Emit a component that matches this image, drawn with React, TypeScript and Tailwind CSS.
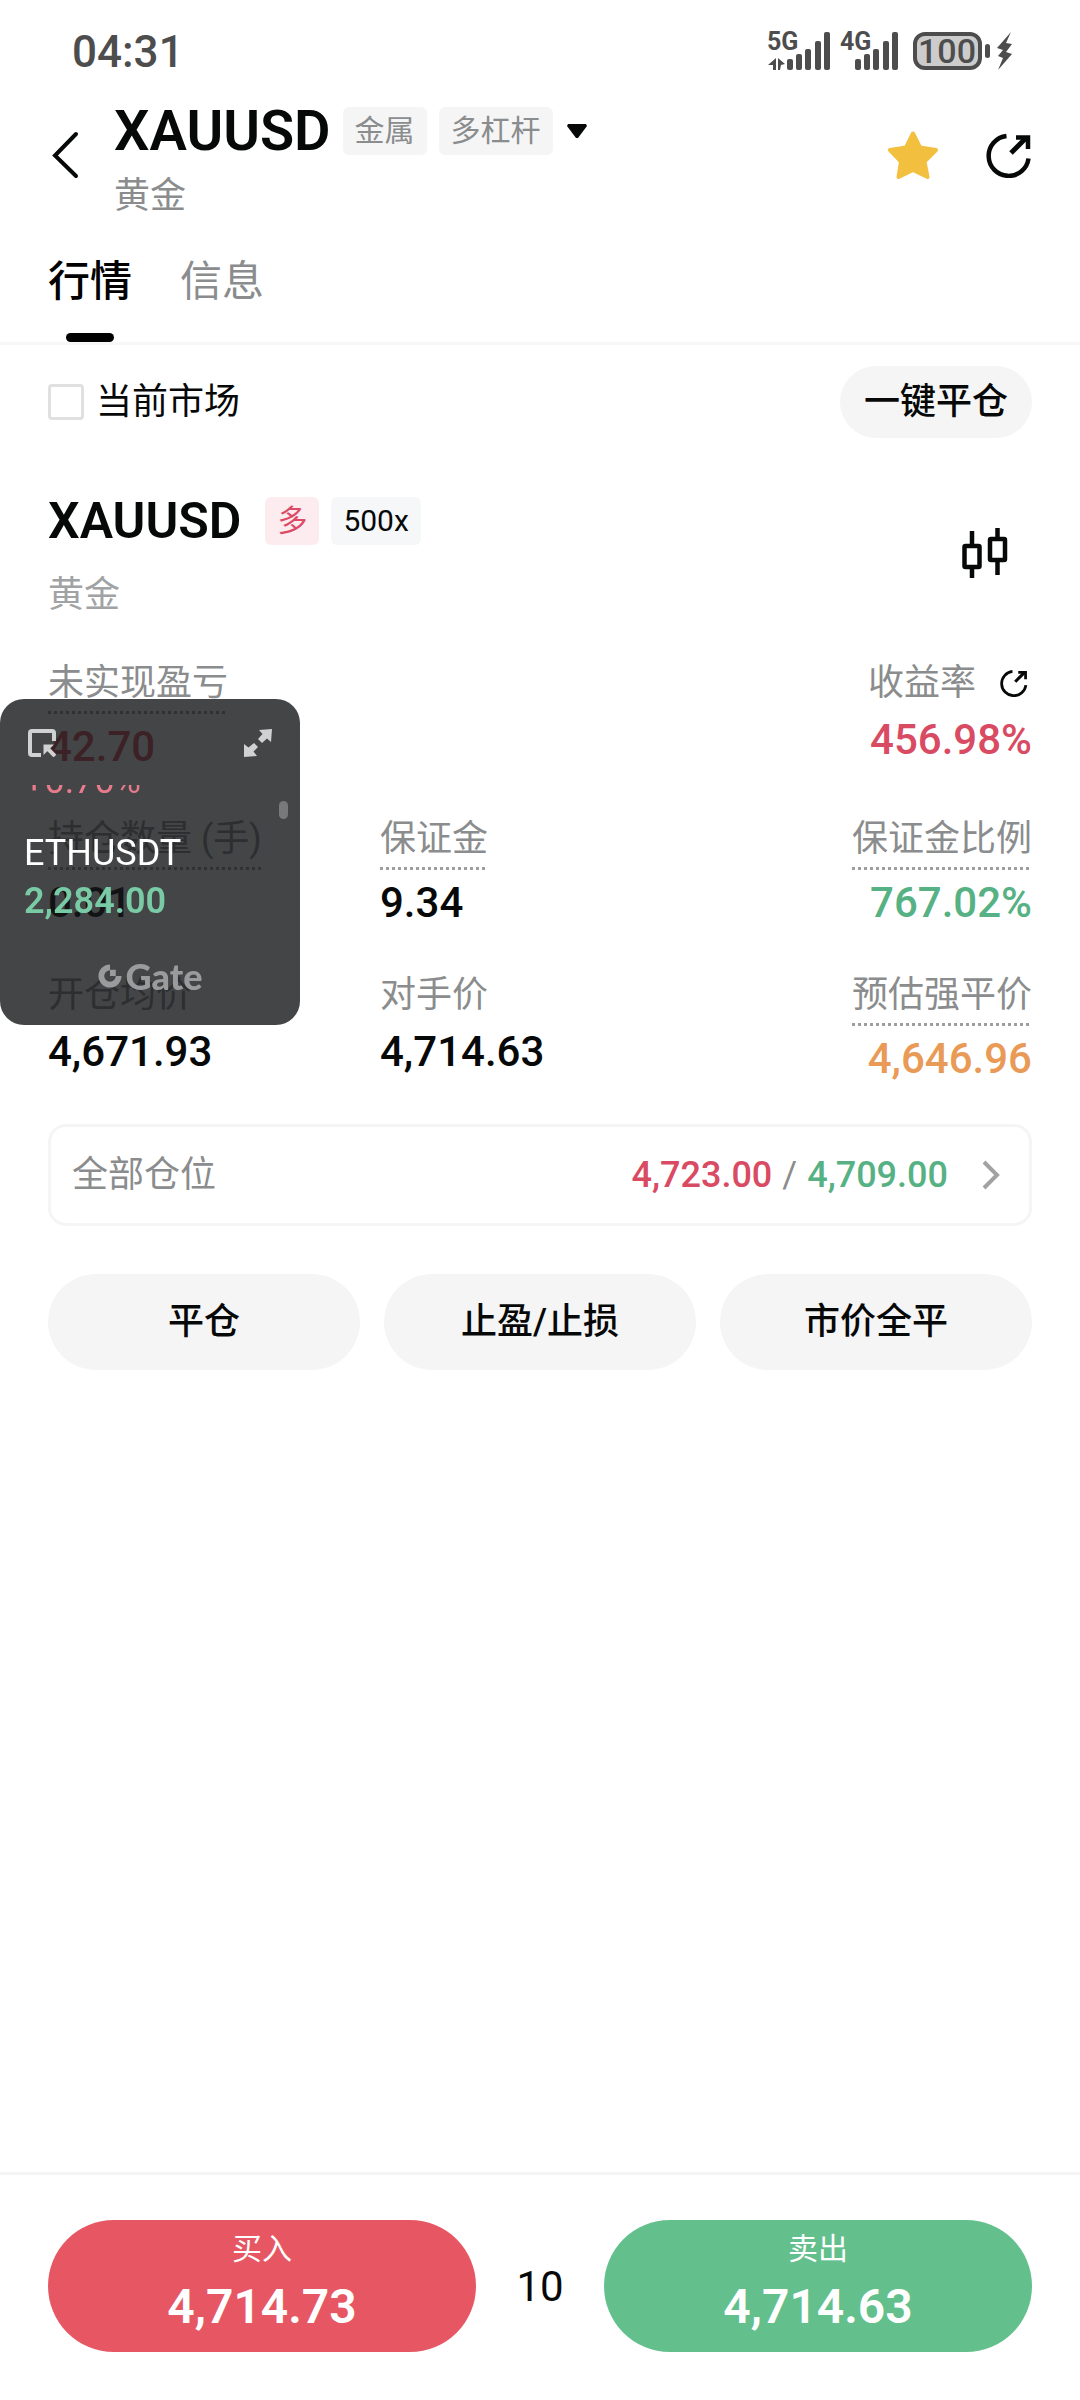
import { useState } from 'react';
import type { ReactNode } from 'react';

type Tone = 'default' | 'red' | 'green' | 'orange';

type Stat = {
  label: string;
  value: string;
  tone?: Tone;
  hint?: boolean;
  alignRight?: boolean;
};

const toneClass: Record<Tone, string> = {
  default: 'text-[#070808]',
  red: 'text-[#d94a63]',
  green: 'text-[#56b184]',
  orange: 'text-[#e99a56]',
};

const stats: Stat[] = [
  { label: '持仓数量 (手)', value: '0.01', hint: true },
  { label: '保证金', value: '9.34', hint: true },
  { label: '保证金比例', value: '767.02%', tone: 'green', hint: true, alignRight: true },
  { label: '开仓均价', value: '4,671.93' },
  { label: '对手价', value: '4,714.63' },
  { label: '预估强平价', value: '4,646.96', tone: 'orange', hint: true, alignRight: true },
];

const tabs = ['行情', '信息'];
const actions = ['平仓', '止盈/止损', '市价全平'];

function ShareIcon({ className }: { className: string }) {
  return (
    <svg viewBox="0 0 46 46" fill="none" stroke="currentColor" strokeWidth="4.500" className={className}>
      <path d="M20.500 4A20 20 0 1 0 42.500 26.500" />
      <path d="M25 21L40 6" strokeWidth="5" />
      <path d="M30 5.500H42V17" />
    </svg>
  );
}

function SignalBars({ x }: { x: number }) {
  return (
    <g>
      <rect x={x} y="27" width="6" height="11" rx="2" />
      <rect x={x + 9} y="22" width="6" height="16" rx="2" />
      <rect x={x + 18} y="17" width="6" height="21" rx="2" />
      <rect x={x + 28} y="9" width="6" height="29" rx="2" />
      <rect x={x + 37} y="0" width="6" height="38" rx="2" />
    </g>
  );
}

function StatusBar() {
  return (
    <div className="flex h-[98px] items-center justify-between pt-1.5 pr-[66px] pl-[72px] text-[#4d4d4d]">
      <span className="text-[44px] leading-none font-medium">04:31</span>
      <svg viewBox="0 0 246 40" className="h-10 w-[246px] overflow-visible" fill="currentColor">
        <text x="-1" y="18" fontSize="25" fontWeight="700">5G</text>
        <path d="M0 33L8 26V38H5V33zM10 26L17 32L13 33L12 38H10z" />
        <SignalBars x={19} />
        <text x="72" y="18" fontSize="25" fontWeight="700">4G</text>
        <SignalBars x={87} />
        <rect x="147" y="2" width="65" height="34" rx="10" fill="#cccccc" stroke="currentColor" strokeWidth="4" />
        <text x="179" y="31" fontSize="34" fontWeight="500" textAnchor="middle">100</text>
        <rect x="217" y="12" width="5" height="14" rx="2.500" />
        <path d="M243 0L229 16L235 18L230 24L235 26L230 38L244 22L238 20L244 12L238 11z" />
      </svg>
    </div>
  );
}

function Header() {
  return (
    <header className="flex items-center px-12">
      <button type="button" aria-label="返回" className="flex w-[66px] items-center pb-2 pl-1">
        <svg viewBox="0 0 28 48" className="h-12 w-7" fill="none" stroke="currentColor" strokeWidth="4" strokeLinecap="round">
          <path d="M24 3L3 24.500L24 45" />
        </svg>
      </button>
      <div className="flex-1">
        <div className="flex items-center">
          <h1 className="text-[56px] leading-[66px] font-semibold">XAUUSD</h1>
          <span className="ml-3 rounded-md bg-[#f5f5f5] px-3 text-[30px] leading-[48px] text-[#8a8c8d]">金属</span>
          <span className="ml-3 rounded-md bg-[#f5f5f5] px-3 text-[30px] leading-[48px] text-[#8a8c8d]">多杠杆</span>
          <svg viewBox="0 0 20 14" className="ml-3.5 h-3.5 w-5" fill="currentColor">
            <path d="M1 0H19L20 2L11 14H9L0 2z" />
          </svg>
        </div>
        <p className="mt-2 text-[36px] leading-[48px] text-[#8a8c8d]">黄金</p>
      </div>
      <button type="button" aria-label="收藏" className="mr-12 pb-2">
        <svg viewBox="0 0 50 48" className="h-12 w-[50px] text-[#f3bf3f]" fill="currentColor" stroke="currentColor" strokeWidth="4" strokeLinejoin="round">
          <path d="M25 2.500L32 16.500L48 19L36.500 30.500L39.500 46L25 39L10.500 46L13 30.500L2 19L18 16.500z" />
        </svg>
      </button>
      <button type="button" aria-label="分享" className="pb-2">
        <ShareIcon className="h-[46px] w-[46px]" />
      </button>
    </header>
  );
}

function Tabs() {
  const [active, setActive] = useState('行情');

  return (
    <nav className="flex gap-12 border-b-3 border-[#f7f7f7] px-12 pt-8">
      {tabs.map((tab) => (
        <button
          key={tab}
          type="button"
          onClick={() => setActive(tab)}
          className={`flex flex-col items-center gap-[21px] text-[42px] leading-[60px] ${
            tab === active ? 'font-medium text-black' : 'text-[#8a8c8d]'
          }`}
        >
          {tab}
          <span className={`h-[9px] w-12 rounded-full ${tab === active ? 'bg-black' : ''}`} />
        </button>
      ))}
    </nav>
  );
}

function StatLabel({ hint, children }: { hint?: boolean; children: ReactNode }) {
  return (
    <div className="flex flex-col items-start text-[36px] leading-[48px] text-[#8a8c8d]">
      {children}
      {hint && (
        <svg className="mt-1 h-[3px] w-0 min-w-full" stroke="#9c9e9f" strokeWidth="3" strokeDasharray="3 3">
          <line x1="0" y1="1.500" x2="100%" y2="1.500" />
        </svg>
      )}
    </div>
  );
}

function StatItem({ label, value, tone = 'default', hint, alignRight }: Stat) {
  return (
    <div className={`flex flex-col ${alignRight ? 'items-end' : 'items-start'}`}>
      <StatLabel hint={hint}>{label}</StatLabel>
      <span className={`text-[42px] leading-[66px] font-medium ${toneClass[tone]}`}>{value}</span>
    </div>
  );
}

function Position() {
  return (
    <section className="px-12 pt-[53px]">
      <div className="flex items-center justify-between">
        <div>
          <div className="flex items-center">
            <h2 className="text-[50px] leading-[60px] font-semibold">XAUUSD</h2>
            <span className="ml-6 rounded-md bg-[#fdecef] px-3 text-[30px] leading-[48px] text-[#dc4a66]">多</span>
            <span className="ml-3 rounded-md bg-[#f5f7f8] px-3 text-[30px] leading-[48px]">500x</span>
          </div>
          <p className="mt-5 text-[36px] leading-[48px] text-[#a0a2a3]">黄金</p>
        </div>
        <button type="button" aria-label="K线" className="mr-6 pb-1">
          <svg viewBox="0 0 46 50" className="h-[50px] w-[46px]" fill="none" stroke="currentColor" strokeWidth="4.500">
            <rect x="2.500" y="18" width="15" height="21" rx="1" />
            <path d="M10 3V18M10 39V50" />
            <rect x="28" y="11" width="15" height="21" rx="1" />
            <path d="M35.500 0V11M35.500 32V47" />
          </svg>
        </button>
      </div>

      <div className="mt-10 flex justify-between">
        <StatItem label="未实现盈亏" value="42.70" tone="red" hint />
        <div className="flex flex-col items-end">
          <div className="flex items-center gap-6">
            <StatLabel>收益率</StatLabel>
            <button type="button" aria-label="分享收益" className="mr-1 flex">
              <ShareIcon className="h-7 w-7" />
            </button>
          </div>
          <span className="text-[42px] leading-[66px] font-medium text-[#d94a63]">456.98%</span>
        </div>
      </div>

      <div className="mt-[35px] grid grid-cols-3 gap-x-3 gap-y-[35px]">
        {stats.map((stat) => (
          <StatItem key={stat.label} {...stat} />
        ))}
      </div>

      <button
        type="button"
        className="mt-8 flex w-full items-center justify-between rounded-[18px] border-3 border-[#f5f5f5] px-[21px] py-6 text-[36px] leading-[48px] text-[#8a8c8d]"
      >
        <span>全部仓位</span>
        <span className="flex items-center">
          <span className="font-medium text-[#d94a63]">4,723.00</span>
          <span className="mx-2.5">/</span>
          <span className="font-medium text-[#56b184]">4,709.00</span>
          <svg viewBox="0 0 18 30" className="mr-2 ml-[34px] h-[30px] w-[18px]" fill="none" stroke="#a0a2a3" strokeWidth="4">
            <path d="M2 2L15 15L2 28" />
          </svg>
        </span>
      </button>

      <div className="mt-12 grid grid-cols-3 gap-6">
        {actions.map((action) => (
          <button key={action} type="button" className="h-24 rounded-full bg-[#f5f5f5] text-[36px] font-medium">
            {action}
          </button>
        ))}
      </div>
    </section>
  );
}

function GateLogo() {
  return (
    <div className="flex items-center justify-center text-[#9a9b9c]">
      <svg viewBox="0 0 24 25" className="h-6 w-6" fill="none">
        <path d="M12 3.500A9 9 0 1 0 21 12.500" stroke="currentColor" strokeWidth="6" />
        <rect x="12" y="6" width="6" height="6.500" fill="currentColor" />
      </svg>
      <span className="ml-1 font-[Lato,sans-serif] text-[36px] leading-[34px] font-black">Gate</span>
    </div>
  );
}

// floating ticker, stays above the page
function FloatingTicker() {
  return (
    <aside className="fixed top-[699px] left-0 w-[300px] rounded-3xl bg-[#141618]/80 pt-[30px] pb-8">
      <div className="flex justify-between px-7">
        <button type="button" aria-label="返回应用">
          <svg viewBox="0 0 28 28" className="h-7 w-7" fill="none" stroke="#d0d1d1" strokeWidth="4">
            <path d="M13 26H4Q2 26 2 24V4Q2 2 4 2H24Q26 2 26 4V12" />
            <path d="M15.500 15.500H26L15.500 26z" fill="#d0d1d1" stroke="none" />
            <path d="M19 19L27 27" />
          </svg>
        </button>
        <button type="button" aria-label="展开">
          <svg viewBox="0 0 28 28" className="h-7 w-7" fill="#d0d1d1">
            <path d="M15 1L28 0L27 13L23 9.500L18 14L14 10L18.500 5z" />
            <path d="M13 27L0 28V15L4.500 18.500L10 14L14 18L9.500 22.500z" />
          </svg>
        </button>
      </div>
      <div className="mt-7 flex h-[150px] justify-between overflow-hidden pr-3 pl-6 text-[36px]">
        <div className="-mt-7">
          <p className="leading-[48px] text-[#e77b8b]">+0.70%</p>
          <p className="mt-6 leading-[48px] text-white">ETHUSDT</p>
          <p className="leading-[48px] font-semibold text-[#79cba5]">2,284.00</p>
        </div>
        <span className="mt-4 h-[18px] w-[9px] rounded-full bg-[#77797a]" />
      </div>
      <div className="mt-6">
        <GateLogo />
      </div>
    </aside>
  );
}

function TradeBar() {
  return (
    <footer className="mt-auto flex items-center border-t-3 border-[#f5f5f5] px-12 pt-[45px] pb-12">
      <button type="button" className="flex h-[132px] flex-1 flex-col items-center rounded-full bg-[#e65763] pt-1.5 text-white">
        <span className="text-[30px] leading-[46px]">买入</span>
        <span className="text-[48px] leading-[70px] font-semibold">4,714.73</span>
      </button>
      <span className="w-32 text-center text-[42px]">10</span>
      <button type="button" className="flex h-[132px] flex-1 flex-col items-center rounded-full bg-[#63c08d] pt-1.5 text-white">
        <span className="text-[30px] leading-[46px]">卖出</span>
        <span className="text-[48px] leading-[70px] font-semibold">4,714.63</span>
      </button>
    </footer>
  );
}

export default function App() {
  return (
    <div className="flex min-h-screen flex-col bg-white font-[Roboto,'Noto_Sans_CJK_SC',sans-serif] text-[#070808]">
      <StatusBar />
      <Header />
      <Tabs />
      <div className="flex items-center justify-between px-12 pt-[21px]">
        <label className="flex items-center gap-3 text-[36px]">
          <input type="checkbox" className="h-9 w-9 appearance-none rounded-sm border-3 border-[#e0e0e0] checked:bg-black" />
          当前市场
        </label>
        <button type="button" className="h-[72px] rounded-full bg-[#f5f5f5] px-6 text-[36px] font-medium">
          一键平仓
        </button>
      </div>
      <Position />
      <TradeBar />
      <FloatingTicker />
    </div>
  );
}
